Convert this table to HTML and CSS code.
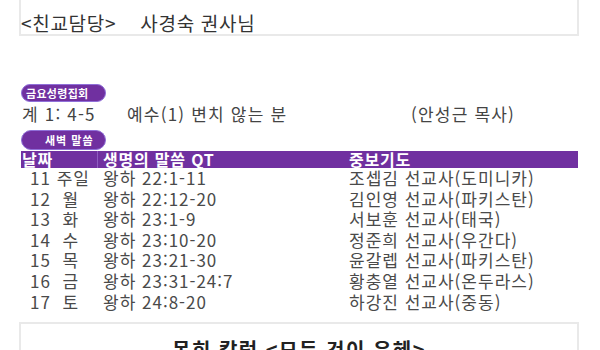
FILE: index.html
```html
<!DOCTYPE html>
<html lang="ko">
<head>
<meta charset="utf-8">
<link rel="stylesheet" href="styles.css">
</head>
<body>
<div class="page">
  <div class="box top-box">
    <p class="title">&lt;친교담당&gt;&nbsp;&nbsp;&nbsp; 사경숙 권사님</p>
  </div>

  <div class="pill pill-friday">금요성령집회</div>
  <div class="sermon">
    <span>계 1: 4-5</span>
    <span>예수(1) 변치 않는 분</span>
    <span>(안성근 목사)</span>
  </div>

  <div class="pill pill-dawn">새벽 말씀</div>
  <div class="table">
    <div class="row head">
      <div class="c1">날짜</div>
      <div class="c2">생명의 말씀 QT</div>
      <div class="c3">중보기도</div>
    </div>
    <div class="row">
      <div class="c1">11 주일</div>
      <div class="c2">왕하 22:1-11</div>
      <div class="c3">조셉김 선교사(도미니카)</div>
    </div>
    <div class="row">
      <div class="c1">12 &nbsp;월</div>
      <div class="c2">왕하 22:12-20</div>
      <div class="c3">김인영 선교사(파키스탄)</div>
    </div>
    <div class="row">
      <div class="c1">13 &nbsp;화</div>
      <div class="c2">왕하 23:1-9</div>
      <div class="c3">서보훈 선교사(태국)</div>
    </div>
    <div class="row">
      <div class="c1">14 &nbsp;수</div>
      <div class="c2">왕하 23:10-20</div>
      <div class="c3">정준희 선교사(우간다)</div>
    </div>
    <div class="row">
      <div class="c1">15 &nbsp;목</div>
      <div class="c2">왕하 23:21-30</div>
      <div class="c3">윤갈렙 선교사(파키스탄)</div>
    </div>
    <div class="row">
      <div class="c1">16 &nbsp;금</div>
      <div class="c2">왕하 23:31-24:7</div>
      <div class="c3">황충열 선교사(온두라스)</div>
    </div>
    <div class="row">
      <div class="c1">17 &nbsp;토</div>
      <div class="c2">왕하 24:8-20</div>
      <div class="c3">하강진 선교사(중동)</div>
    </div>
  </div>

  <div class="box bottom-box">
    <p class="column-title">목회 칼럼 &lt;모든 것이 은혜&gt;</p>
  </div>
</div>
</body>
</html>
```

FILE: styles.css
```css
html, body {
  margin: 0;
  padding: 0;
  background: #ffffff;
  overflow: hidden;
}

body {
  font-family: "Noto Sans CJK KR", "Noto Sans", sans-serif;
  color: #4a4a4a;
}

.page {
  width: 557px;
  margin: 0 0 0 21px;
}

.box {
  border: 2px solid #e9e9e9;
  margin-left: -2px;
  margin-right: -1px;
  background: #fff;
}

.top-box {
  margin-top: -10px;
  padding: 20px 0 0 0;
}

.title {
  margin: 0;
  font-size: 19px;
  letter-spacing: 0.7px;
  line-height: 22px;
  color: #333;
}

.pill {
  width: 85px;
  border: 1px solid #8f6fd8;
  border-radius: 10px;
  background: #7030a0;
  color: #fff;
  font-weight: bold;
  font-size: 11px;
  box-sizing: border-box;
  white-space: nowrap;
}

.pill-friday {
  margin-top: 48px;
  height: 18px;
  line-height: 16px;
  padding-left: 4px;
  letter-spacing: 0.3px;
}

.pill-dawn {
  margin-top: 6px;
  height: 20px;
  line-height: 18px;
  padding-left: 23px;
  letter-spacing: 1px;
}

.sermon {
  display: grid;
  grid-template-columns: 105px 284px auto;
  font-size: 17px;
  letter-spacing: 1.2px;
  line-height: 21px;
  margin-top: 1px;
  padding-left: 1px;
  color: #444;
  white-space: nowrap;
}

.table {
  margin-top: 1px;
}

.row {
  display: grid;
  grid-template-columns: 76px 250px 1fr;
  font-size: 17px;
  letter-spacing: 1px;
  height: 20.6px;
  line-height: 20.6px;
  white-space: nowrap;
}

.row .c1 { padding-left: 9px; }
.row .c2 { padding-left: 6px; }
.row .c3 { padding-left: 2px; }

.row.head {
  background: #7030a0;
  color: #fff;
  font-weight: bold;
  font-size: 16px;
  letter-spacing: 0.8px;
  height: 17px;
  line-height: 17px;
}

.row.head .c1 { padding-left: 1px; }
.row.head .c2 {
  border-left: 1px solid #8e5cc0;
  padding-left: 5px;
}

.bottom-box {
  margin-top: 10px;
  height: 60px;
}

.column-title {
  margin: 14px 0 0 0;
  text-align: center;
  font-weight: bold;
  font-size: 20px;
  letter-spacing: 1.5px;
  line-height: 24px;
  color: #222;
}
```
